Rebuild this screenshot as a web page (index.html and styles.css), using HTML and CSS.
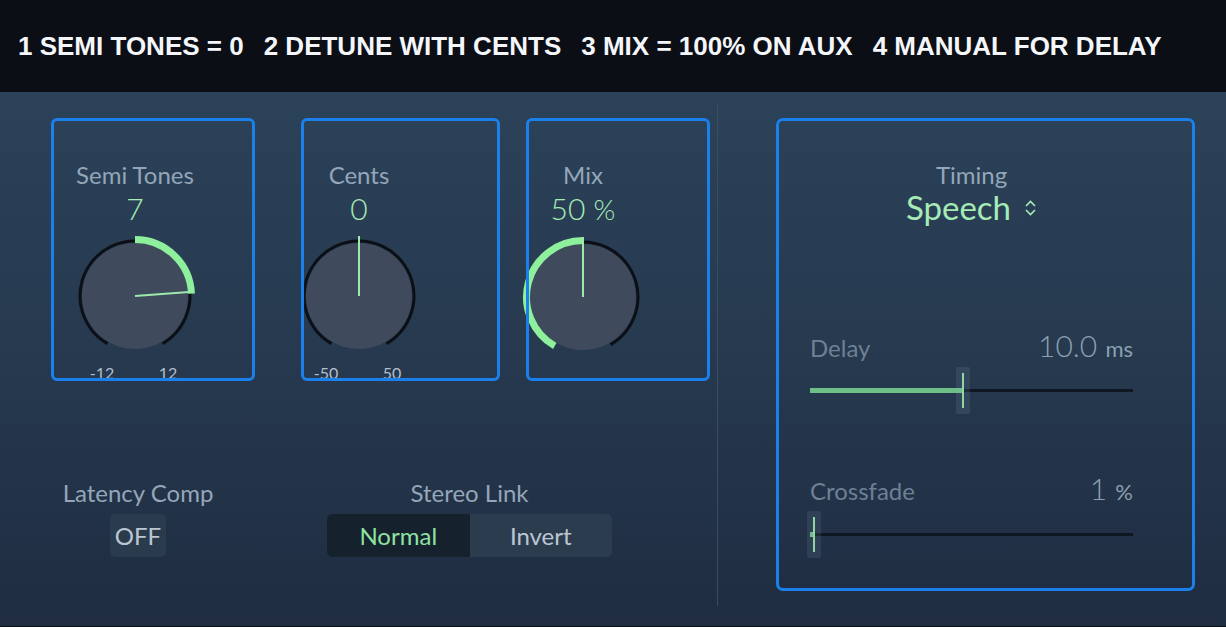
FILE: index.html
```html
<!DOCTYPE html>
<html lang="en">
<head>
<meta charset="utf-8">
<title>Pitch Shifter</title>
<link rel="stylesheet" href="styles.css">
</head>
<body>
<header class="topbar">
  <span>1 SEMI TONES = 0</span>
  <span>2 DETUNE WITH CENTS</span>
  <span>3 MIX = 100% ON AUX</span>
  <span>4 MANUAL FOR DELAY</span>
</header>
<main class="panel">
  <section class="left">
    <div class="knobs">
      <div class="knob">
        <div class="label">Semi Tones</div>
        <div class="value">7</div>
        <svg class="dial" viewBox="0 0 140 140">
          <circle class="body" cx="70" cy="70" r="53"/>
          <path class="ring" d="M42.5 117.63 A55 55 0 1 1 97.5 117.63"/>
          <path class="arc" d="M70 13.5 A56.5 56.5 0 0 1 126.45 67.54"/>
          <line class="pointer" x1="70" y1="70" x2="124" y2="66"/>
        </svg>
        <div class="scale"><span>-12</span><span>12</span></div>
      </div>
      <div class="knob">
        <div class="label">Cents</div>
        <div class="value">0</div>
        <svg class="dial" viewBox="0 0 140 140">
          <circle class="body" cx="70" cy="70" r="53"/>
          <path class="ring" d="M42.5 117.63 A55 55 0 1 1 97.5 117.63"/>
          <line class="pointer" x1="70" y1="70" x2="70" y2="10"/>
        </svg>
        <div class="scale"><span>-50</span><span>50</span></div>
      </div>
      <div class="knob">
        <div class="label">Mix</div>
        <div class="value">50 <span class="unit-sm">%</span></div>
        <svg class="dial" viewBox="0 0 140 140">
          <circle class="body" cx="70" cy="70" r="53"/>
          <path class="ring" d="M42.5 117.63 A55 55 0 1 1 97.5 117.63"/>
          <path class="arc" d="M41.75 118.93 A56.5 56.5 0 0 1 70 13.5"/>
          <line class="pointer" x1="70" y1="70" x2="70" y2="10"/>
        </svg>
        <div class="scale"></div>
      </div>
    </div>
    <div class="controls">
      <div class="ctl ctl-latency">
        <div class="label">Latency Comp</div>
        <div class="btn">OFF</div>
      </div>
      <div class="ctl ctl-stereo">
        <div class="label">Stereo Link</div>
        <div class="segmented">
          <div class="seg seg-on">Normal</div>
          <div class="seg">Invert</div>
        </div>
      </div>
    </div>
  </section>
  <div class="divider"></div>
  <section class="right">
    <div class="timing">
      <div class="timing-head">
        <div class="label">Timing</div>
        <div class="select">
          <span>Speech</span>
          <svg class="chev" viewBox="0 0 13 18"><path d="M2 7 L6.5 2.5 L11 7 M2 11 L6.5 15.5 L11 11"/></svg>
        </div>
      </div>
      <div class="param param-delay">
        <span class="param-label">Delay</span>
        <span class="param-value">10.0 <span class="unit">ms</span></span>
      </div>
      <div class="slider">
        <div class="track"><div class="fill" style="width:153px"></div></div>
        <div class="thumb" style="left:146px"></div>
      </div>
      <div class="param param-cross">
        <span class="param-label">Crossfade</span>
        <span class="param-value">1 <span class="unit">%</span></span>
      </div>
      <div class="slider">
        <div class="track"><div class="fill" style="width:4px"></div></div>
        <div class="thumb" style="left:-3px"></div>
      </div>
    </div>
  </section>
  <div class="hl hl-semi"></div>
  <div class="hl hl-cents"></div>
  <div class="hl hl-mix"></div>
</main>
</body>
</html>
```
FILE: styles.css
```css
* { box-sizing: border-box; }

body {
  margin: 0;
  width: 1226px;
  height: 627px;
  overflow: hidden;
  background: #0b0e14;
  font-family: Lato, "Noto Sans", sans-serif;
}

.topbar {
  height: 92px;
  display: flex;
  align-items: center;
  gap: 20px;
  padding-left: 18px;
  font-family: "Liberation Sans", Arial, sans-serif;
  font-weight: 700;
  font-size: 26px;
  line-height: 1;
  color: #f4f6fa;
  white-space: nowrap;
}

.panel {
  position: relative;
  display: flex;
  height: 535px;
  background: linear-gradient(180deg, #2b4259 0%, #26394f 50%, #1f2c41 100%);
  border-bottom: 1px solid #0b0e14;
}

.left {
  width: 717px;
  display: flex;
  flex-direction: column;
  padding-top: 68px;
}

.knobs {
  display: grid;
  grid-template-columns: repeat(3, 224px);
  padding-left: 23px;
}

.knob {
  display: flex;
  flex-direction: column;
  align-items: center;
}

.label {
  font-size: 24px;
  line-height: 29px;
  color: #94a6b9;
  white-space: nowrap;
}

.value {
  font-size: 30px;
  font-weight: 300;
  line-height: 36px;
  margin-top: 1px;
  color: #a6ebb6;
}

.unit-sm { font-size: 28px; }

.dial {
  display: block;
  width: 140px;
  height: 140px;
  overflow: visible;
}

.dial .body { fill: #3f4b5d; }
.dial .ring { fill: none; stroke: #0c1016; stroke-width: 3; }
.dial .arc { fill: none; stroke: #8ef09c; stroke-width: 7; }
.dial .pointer { stroke: #9fe8ad; stroke-width: 2; }

.scale {
  display: flex;
  justify-content: space-between;
  width: 106px;
  height: 19px;
  margin-top: -3px;
  font-size: 16px;
  line-height: 19px;
  color: #b3bfcc;
}

.scale span { width: 40px; text-align: center; }

.controls {
  display: flex;
  gap: 99px;
  margin-top: 95px;
  padding-left: 48px;
}

.ctl {
  display: flex;
  flex-direction: column;
  align-items: center;
}

.ctl-latency { width: 180px; }
.ctl-stereo { width: 285px; }

.btn {
  margin-top: 7px;
  width: 56px;
  height: 43px;
  border-radius: 5px;
  background: #2b3b4e;
  color: #bcc6d2;
  font-size: 24px;
  display: flex;
  align-items: center;
  justify-content: center;
}

.segmented {
  margin-top: 7px;
  width: 285px;
  height: 43px;
  display: flex;
  border-radius: 5px;
  background: #2c3c4f;
  overflow: hidden;
}

.seg {
  flex: 1;
  display: flex;
  align-items: center;
  justify-content: center;
  font-size: 24px;
  color: #bcc6d2;
}

.seg-on {
  background: #16212e;
  color: #8fe3a2;
}

.divider {
  width: 1px;
  margin: 11px 0 20px;
  background: #394c61;
}

.right {
  padding: 26px 0 0 58px;
}

.timing {
  width: 419px;
  height: 473px;
  border: 3px solid #1b80ea;
  border-radius: 7px;
  padding: 39px 59px 0 31px;
  display: flex;
  flex-direction: column;
}

.timing-head {
  display: flex;
  flex-direction: column;
  align-items: center;
}

.select {
  display: flex;
  align-items: center;
  gap: 13px;
  font-size: 33px;
  line-height: 36px;
  color: #a6ebb6;
}

.chev {
  width: 13px;
  height: 18px;
  margin-top: 2px;
}

.chev path {
  fill: none;
  stroke: #a6ebb6;
  stroke-width: 1.6;
}

.param {
  display: flex;
  justify-content: space-between;
  align-items: baseline;
  height: 36px;
}

.param-delay { margin-top: 102px; }
.param-cross { margin-top: 56px; }

.param-label {
  font-size: 24px;
  color: #6d8195;
}

.param-value {
  font-size: 30px;
  font-weight: 300;
  line-height: 36px;
  color: #8aa1af;
}

.unit { font-size: 22px; font-weight: 400; }

.slider {
  position: relative;
  height: 47px;
  margin-top: 4px;
  display: flex;
  align-items: center;
}

.param-cross + .slider { margin-top: 5px; }

.track {
  flex: 1;
  height: 3px;
  background: #0f1722;
  display: flex;
  align-items: center;
}

.fill {
  height: 5px;
  background: #6dbf88;
}

.thumb {
  position: absolute;
  top: 0;
  width: 14px;
  height: 47px;
  border-radius: 2px;
  background: rgba(150, 180, 200, 0.13);
}

.thumb::after {
  content: "";
  position: absolute;
  left: 6px;
  top: 6px;
  width: 2px;
  height: 35px;
  background: #8fd6a1;
}

.hl {
  position: absolute;
  top: 26px;
  height: 263px;
  border: 3px solid #1b80ea;
  border-radius: 6px;
  pointer-events: none;
}

.hl-semi { left: 51px; width: 204px; }
.hl-cents { left: 301px; width: 199px; }
.hl-mix { left: 526px; width: 184px; }
```
